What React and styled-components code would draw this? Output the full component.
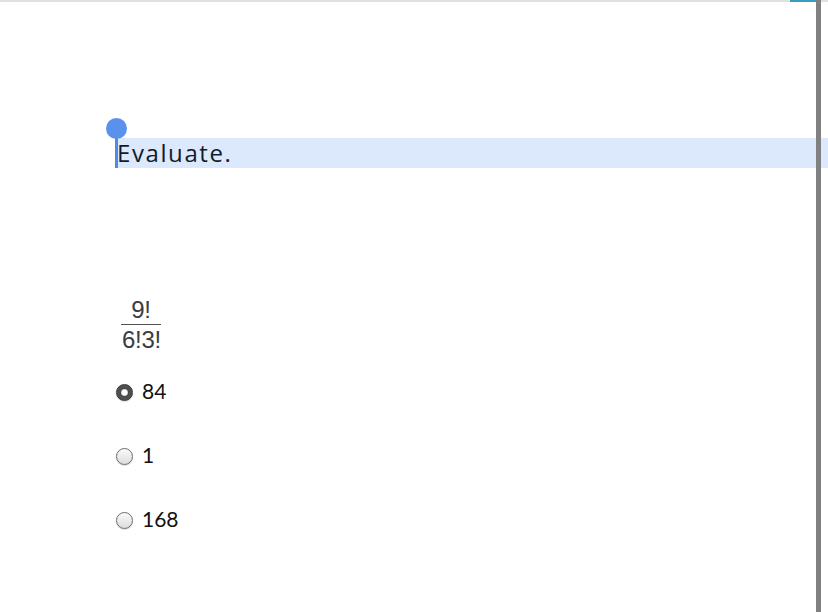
import React from "react";
import styled, { createGlobalStyle } from "styled-components";

const Global = createGlobalStyle`
  html, body { margin: 0; padding: 0; background: #fff; }
  body { font-family: Lato, "Open Sans", sans-serif; overflow: hidden; }
`;

const Shell = styled.div`
  position: relative;
  width: 828px;
  height: 612px;
  background: #fff;
  display: flex;
  flex-direction: column;
`;

const TopRule = styled.div`
  height: 2px;
  background: #e0e0e0;
  display: flex;
  justify-content: flex-end;
  padding-right: 8px;
`;

const TopAccent = styled.div`
  width: 30px;
  height: 2px;
  background: #3a9cbf;
`;

const Divider = styled.div`
  position: absolute;
  top: 0;
  bottom: 0;
  right: 7px;
  width: 5px;
  background: #808080;
  z-index: 2;
`;

const Main = styled.div`
  display: flex;
  flex-direction: column;
  padding-left: 116px;
`;

const Prompt = styled.div`
  position: relative;
  margin-top: 136px;
  height: 30px;
  background: #dce8fb;
  display: flex;
  align-items: flex-end;
`;

const PromptText = styled.span`
  font-family: "Open Sans", sans-serif;
  font-size: 24px;
  font-weight: 500;
  letter-spacing: 1.6px;
  color: #121b2b;
  line-height: 30px;
  padding-left: 1px;
`;

const CaretLine = styled.div`
  position: absolute;
  left: -1px;
  top: -10px;
  width: 3px;
  height: 40px;
  background: #4f8ae8;
`;

const CaretKnob = styled.div`
  position: absolute;
  left: -10px;
  top: -20px;
  width: 21px;
  height: 21px;
  border-radius: 50%;
  background: #5a91ec;
`;

const Fraction = styled.div`
  margin-top: 129px;
  margin-left: 5px;
  display: inline-flex;
  flex-direction: column;
  align-items: center;
  align-self: flex-start;
  font-family: "Liberation Sans", Arial, sans-serif;
  font-size: 24px;
  letter-spacing: -0.3px;
  color: #3c3c3c;
`;

const Numerator = styled.div`
  line-height: 26px;
  padding-bottom: 1px;
`;

const Denominator = styled.div`
  line-height: 26px;
  border-top: 1.5px solid #555;
  padding-top: 2px;
  padding-left: 1px;
`;

const Options = styled.div`
  display: flex;
  flex-direction: column;
  gap: 40px;
  margin-top: 25px;
`;

const Option = styled.label`
  display: flex;
  align-items: center;
  gap: 9px;
  height: 24px;
  font-family: Lato, sans-serif;
  font-size: 21px;
  color: #111;
`;

const Radio = styled.span`
  box-sizing: border-box;
  width: 17px;
  height: 17px;
  border-radius: 50%;
  margin-top: 4px;
  border: 1px solid ${(p) => (p.$checked ? "#333" : "#6e6e6e")};
  background: ${(p) =>
    p.$checked
      ? "radial-gradient(circle, #fff 0 2.5px, #d8d8d8 3px, #4a4a4a 4px, #5a5a5a 100%)"
      : "linear-gradient(#fbfbfb, #dcdcdc)"};
  box-shadow: 0 1px 1px rgba(0, 0, 0, 0.15);
`;

const options = [
  { label: "84", checked: true },
  { label: "1", checked: false },
  { label: "168", checked: false },
];

export default function App() {
  return (
    <Shell>
      <Global />
      <TopRule>
        <TopAccent />
      </TopRule>
      <Divider />
      <Main>
        <Prompt>
          <CaretLine />
          <CaretKnob />
          <PromptText>Evaluate.</PromptText>
        </Prompt>
        <Fraction>
          <Numerator>9!</Numerator>
          <Denominator>6!3!</Denominator>
        </Fraction>
        <Options>
          {options.map((o) => (
            <Option key={o.label}>
              <Radio $checked={o.checked} />
              {o.label}
            </Option>
          ))}
        </Options>
      </Main>
    </Shell>
  );
}
